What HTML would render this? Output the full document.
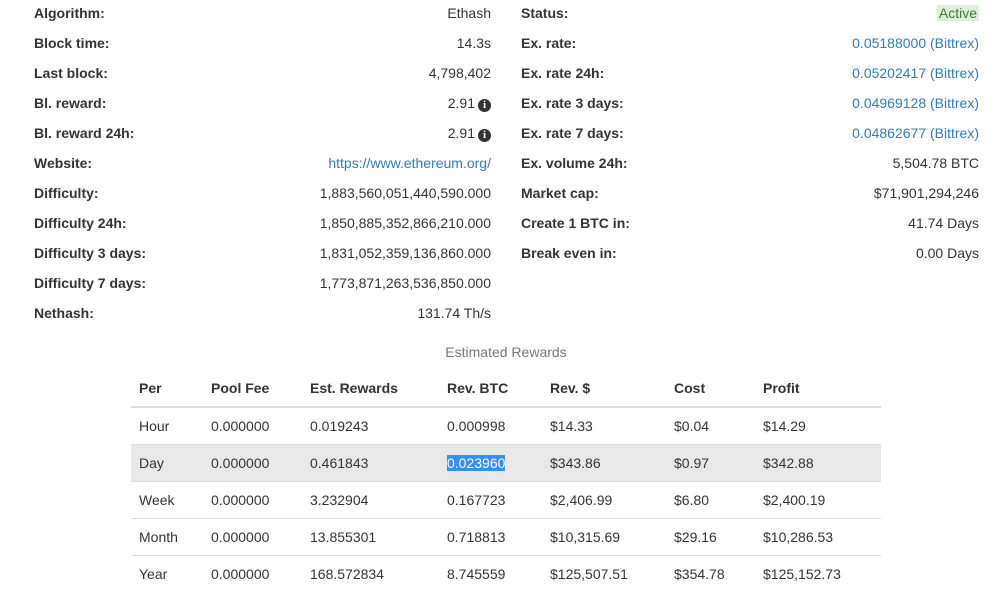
<!DOCTYPE html>
<html><head><style>
body{margin:0;width:994px;height:592px;background:#fff;font-family:"Liberation Sans",Arial,sans-serif;font-size:14px;color:#333;position:relative;overflow:hidden}
.r{position:absolute;height:20px;line-height:20px;white-space:nowrap}
.l{font-weight:bold}
.v{text-align:right}
a{color:#337ab7;text-decoration:none}
.i{display:inline-block;width:13px;height:13px;border-radius:50%;background:#333;color:#fff;font-size:11px;line-height:13px;text-align:center;font-weight:bold;vertical-align:0px;margin-left:3px;font-family:"Liberation Serif",serif}
.act{background:#dff0d8;color:#3c763d;padding:0 2px}
table{position:absolute;left:131px;top:370px;width:750px;border-collapse:collapse;font-size:14px}
th{text-align:left;font-weight:bold;height:36px;padding:0 8px;border-bottom:2px solid #ddd}
td{height:36px;padding:0 8px;border-top:1px solid #ddd}
tr.g td{background:#e8e8e8}
.sel{background:#3390ff;color:#fff}
</style></head><body>
<div class="r l" style="left:34px;top:3px">Algorithm:</div><div class="r v" style="right:503px;top:3px">Ethash</div>
<div class="r l" style="left:34px;top:33px">Block time:</div><div class="r v" style="right:503px;top:33px">14.3s</div>
<div class="r l" style="left:34px;top:63px">Last block:</div><div class="r v" style="right:503px;top:63px">4,798,402</div>
<div class="r l" style="left:34px;top:93px">Bl. reward:</div><div class="r v" style="right:503px;top:93px">2.91<span class="i">i</span></div>
<div class="r l" style="left:34px;top:123px">Bl. reward 24h:</div><div class="r v" style="right:503px;top:123px">2.91<span class="i">i</span></div>
<div class="r l" style="left:34px;top:153px">Website:</div><div class="r v" style="right:503px;top:153px"><a>https://www.ethereum.org/</a></div>
<div class="r l" style="left:34px;top:183px">Difficulty:</div><div class="r v" style="right:503px;top:183px">1,883,560,051,440,590.000</div>
<div class="r l" style="left:34px;top:213px">Difficulty 24h:</div><div class="r v" style="right:503px;top:213px">1,850,885,352,866,210.000</div>
<div class="r l" style="left:34px;top:243px">Difficulty 3 days:</div><div class="r v" style="right:503px;top:243px">1,831,052,359,136,860.000</div>
<div class="r l" style="left:34px;top:273px">Difficulty 7 days:</div><div class="r v" style="right:503px;top:273px">1,773,871,263,536,850.000</div>
<div class="r l" style="left:34px;top:303px">Nethash:</div><div class="r v" style="right:503px;top:303px">131.74 Th/s</div>

<div class="r l" style="left:521px;top:3px">Status:</div><div class="r v" style="right:15px;top:3px"><span class="act">Active</span></div>
<div class="r l" style="left:521px;top:33px">Ex. rate:</div><div class="r v" style="right:15px;top:33px"><a>0.05188000 (Bittrex)</a></div>
<div class="r l" style="left:521px;top:63px">Ex. rate 24h:</div><div class="r v" style="right:15px;top:63px"><a>0.05202417 (Bittrex)</a></div>
<div class="r l" style="left:521px;top:93px">Ex. rate 3 days:</div><div class="r v" style="right:15px;top:93px"><a>0.04969128 (Bittrex)</a></div>
<div class="r l" style="left:521px;top:123px">Ex. rate 7 days:</div><div class="r v" style="right:15px;top:123px"><a>0.04862677 (Bittrex)</a></div>
<div class="r l" style="left:521px;top:153px">Ex. volume 24h:</div><div class="r v" style="right:15px;top:153px">5,504.78 BTC</div>
<div class="r l" style="left:521px;top:183px">Market cap:</div><div class="r v" style="right:15px;top:183px">$71,901,294,246</div>
<div class="r l" style="left:521px;top:213px">Create 1 BTC in:</div><div class="r v" style="right:15px;top:213px">41.74 Days</div>
<div class="r l" style="left:521px;top:243px">Break even in:</div><div class="r v" style="right:15px;top:243px">0.00 Days</div>

<div class="r" style="left:0;width:1012px;text-align:center;top:342px;color:#777">Estimated Rewards</div>
<table>
<tr><th style="width:56px">Per</th><th style="width:83px">Pool Fee</th><th style="width:121px">Est. Rewards</th><th style="width:87px">Rev. BTC</th><th style="width:108px">Rev. $</th><th style="width:73px">Cost</th><th>Profit</th></tr>
<tr><td>Hour</td><td>0.000000</td><td>0.019243</td><td>0.000998</td><td>$14.33</td><td>$0.04</td><td>$14.29</td></tr>
<tr class="g"><td>Day</td><td>0.000000</td><td>0.461843</td><td><span class="sel">0.023960</span></td><td>$343.86</td><td>$0.97</td><td>$342.88</td></tr>
<tr><td>Week</td><td>0.000000</td><td>3.232904</td><td>0.167723</td><td>$2,406.99</td><td>$6.80</td><td>$2,400.19</td></tr>
<tr><td>Month</td><td>0.000000</td><td>13.855301</td><td>0.718813</td><td>$10,315.69</td><td>$29.16</td><td>$10,286.53</td></tr>
<tr><td>Year</td><td>0.000000</td><td>168.572834</td><td>8.745559</td><td>$125,507.51</td><td>$354.78</td><td>$125,152.73</td></tr>
</table>
</body></html>
